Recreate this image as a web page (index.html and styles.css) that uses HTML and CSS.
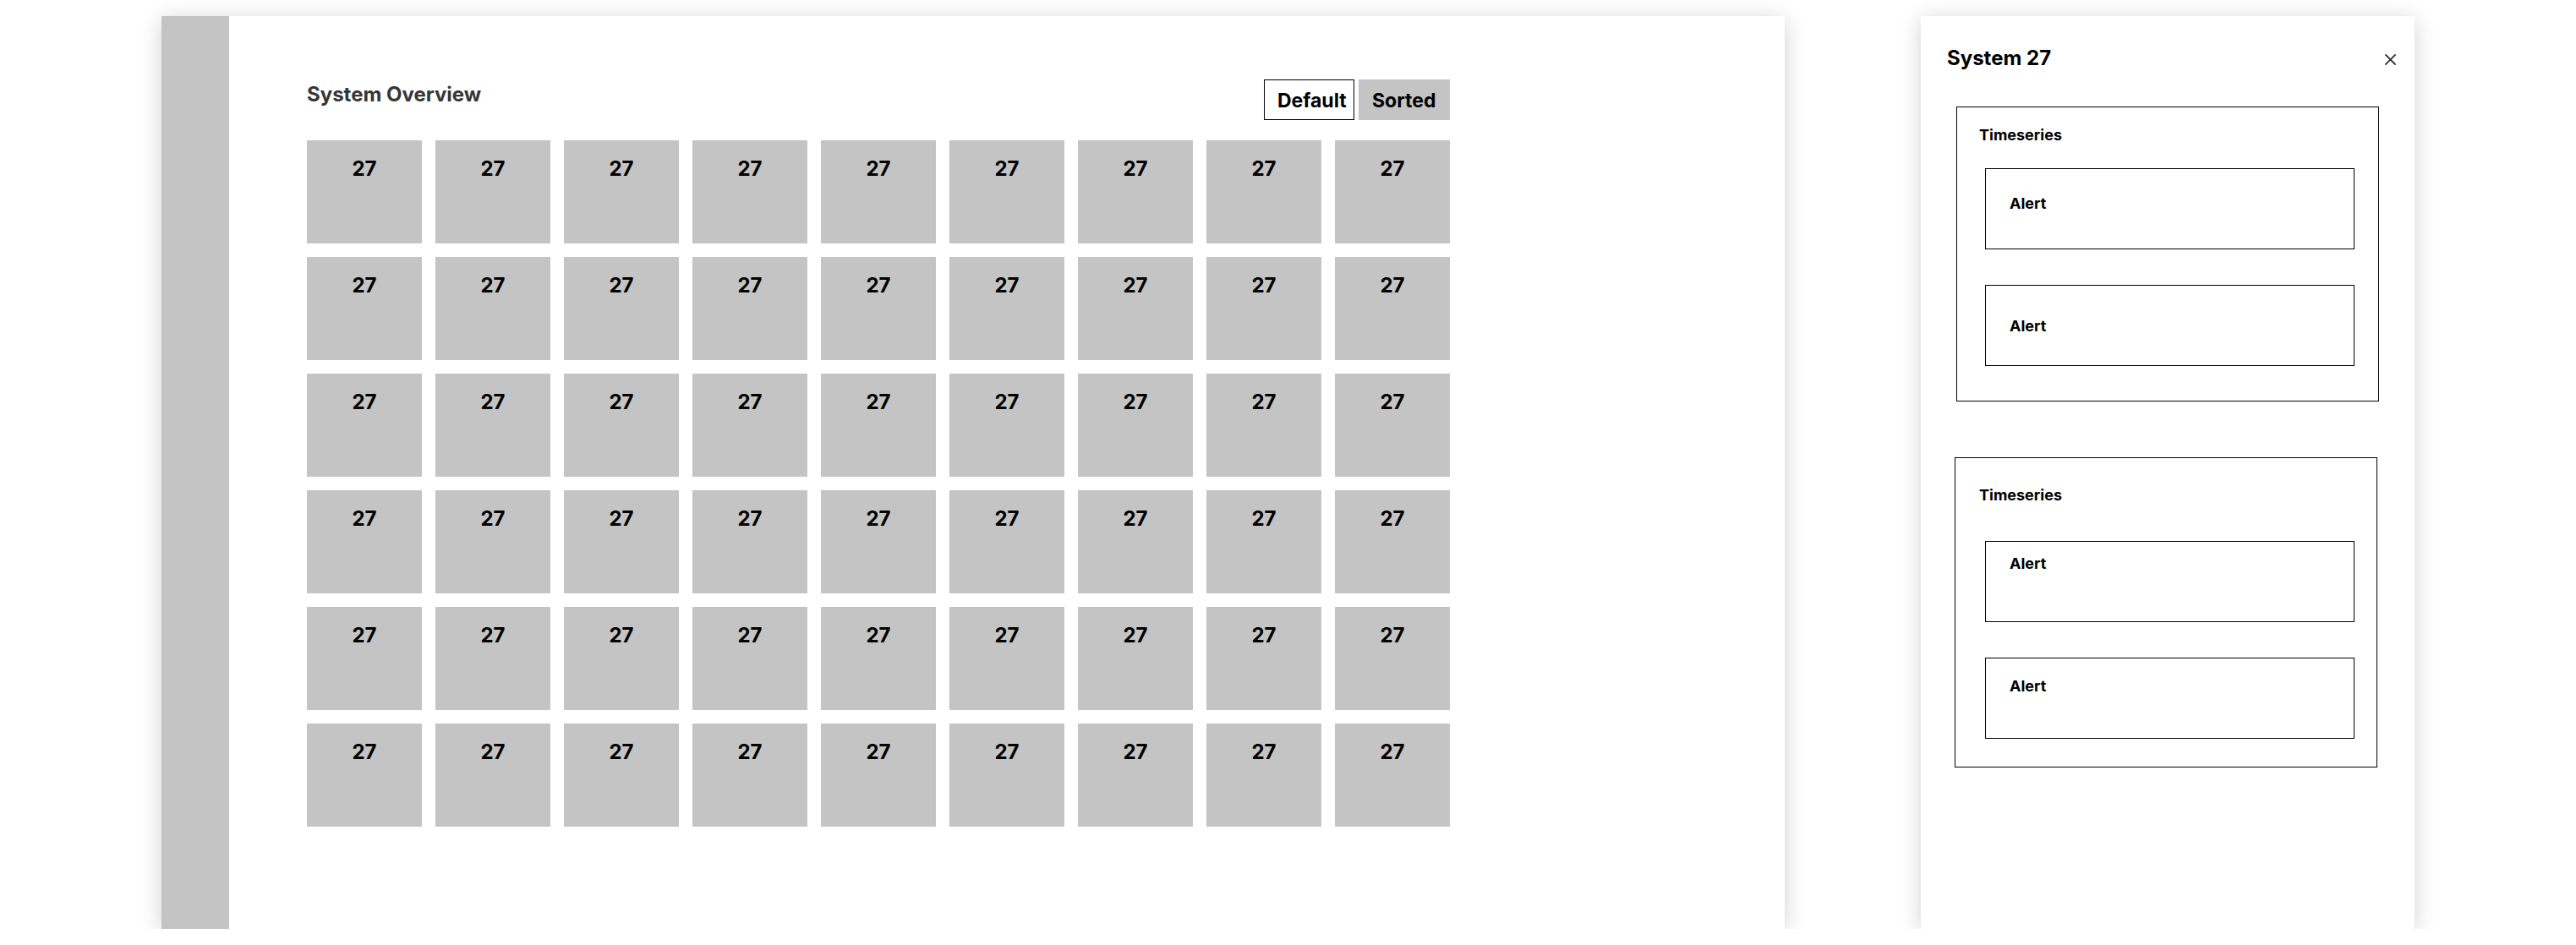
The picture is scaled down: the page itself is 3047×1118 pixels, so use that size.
FILE: index.html
```html
<!DOCTYPE html>
<html lang="en">
<head>
<meta charset="utf-8">
<title>System Overview</title>
<link rel="stylesheet" href="styles.css">
</head>
<body>
<div class="stage">
  <main class="overview">
    <aside class="rail"></aside>
    <section class="content">
      <header class="ov-head">
        <h1 class="ov-title">System Overview</h1>
        <div class="toggle">
          <button class="btn btn-default">Default</button>
          <button class="btn btn-sorted">Sorted</button>
        </div>
      </header>
      <div class="grid">
        <div class="tile">27</div><div class="tile">27</div><div class="tile">27</div><div class="tile">27</div><div class="tile">27</div><div class="tile">27</div><div class="tile">27</div><div class="tile">27</div><div class="tile">27</div>
        <div class="tile">27</div><div class="tile">27</div><div class="tile">27</div><div class="tile">27</div><div class="tile">27</div><div class="tile">27</div><div class="tile">27</div><div class="tile">27</div><div class="tile">27</div>
        <div class="tile">27</div><div class="tile">27</div><div class="tile">27</div><div class="tile">27</div><div class="tile">27</div><div class="tile">27</div><div class="tile">27</div><div class="tile">27</div><div class="tile">27</div>
        <div class="tile">27</div><div class="tile">27</div><div class="tile">27</div><div class="tile">27</div><div class="tile">27</div><div class="tile">27</div><div class="tile">27</div><div class="tile">27</div><div class="tile">27</div>
        <div class="tile">27</div><div class="tile">27</div><div class="tile">27</div><div class="tile">27</div><div class="tile">27</div><div class="tile">27</div><div class="tile">27</div><div class="tile">27</div><div class="tile">27</div>
        <div class="tile">27</div><div class="tile">27</div><div class="tile">27</div><div class="tile">27</div><div class="tile">27</div><div class="tile">27</div><div class="tile">27</div><div class="tile">27</div><div class="tile">27</div>
      </div>
    </section>
  </main>

  <aside class="detail">
    <header class="detail-head">
      <h2 class="detail-title">System 27</h2>
      <button class="close" aria-label="Close">
        <svg width="13" height="13" viewBox="0 0 13 13" aria-hidden="true">
          <path d="M1 1 L12 12 M12 1 L1 12" stroke="#333" stroke-width="1.8" fill="none" stroke-linecap="square"/>
        </svg>
      </button>
    </header>

    <section class="ts ts-1">
      <h3 class="ts-label">Timeseries</h3>
      <div class="alerts">
        <div class="alert alert-a">Alert</div>
        <div class="alert alert-b">Alert</div>
      </div>
    </section>

    <section class="ts ts-2">
      <h3 class="ts-label">Timeseries</h3>
      <div class="alerts">
        <div class="alert alert-c">Alert</div>
        <div class="alert alert-d">Alert</div>
      </div>
    </section>
  </aside>
</div>
</body>
</html>
```

FILE: styles.css
```css
* { box-sizing: border-box; }

html, body {
  margin: 0;
  background: #ffffff;
}

body {
  font-family: Inter, "Liberation Sans", Arial, sans-serif;
  color: #000;
}

.stage {
  display: flex;
  align-items: flex-start;
  gap: 161px;
  padding: 19px 0 0 191px;
}

/* ---------- main overview panel ---------- */
.overview {
  width: 1920px;
  height: 1080px;
  flex: none;
  display: flex;
  background: #fff;
  box-shadow: 0 4px 24px rgba(0, 0, 0, 0.18);
}

.rail {
  width: 80px;
  flex: none;
  background: #c4c4c4;
}

.content {
  padding: 75px 0 0 92px;
}

.ov-head {
  width: 1352px;
  height: 48px;
  display: flex;
  justify-content: space-between;
  align-items: flex-start;
  margin-bottom: 24px;
}

.ov-title {
  margin: 3px 0 0;
  font-size: 24px;
  line-height: 29px;
  font-weight: 700;
  color: #363636;
}

.toggle {
  display: flex;
  gap: 5px;
}

.btn {
  height: 48px;
  margin: 0;
  padding: 2px 0 0 15px;
  text-align: left;
  font-family: inherit;
  font-size: 23px;
  line-height: 29px;
  font-weight: 700;
  color: #000;
  border: 1px solid #000;
  border-radius: 0;
  background: #fff;
}

.btn-default { width: 107px; }

.btn-sorted {
  width: 108px;
  background: #c4c4c4;
  border-color: #c4c4c4;
}

.grid {
  display: grid;
  grid-template-columns: repeat(9, 136px);
  grid-auto-rows: 122px;
  gap: 16px;
}

.tile {
  background: #c4c4c4;
  text-align: center;
  padding-top: 19px;
  font-size: 24px;
  line-height: 29px;
  font-weight: 700;
}

/* ---------- detail panel ---------- */
.detail {
  width: 584px;
  height: 1080px;
  flex: none;
  background: #fff;
  box-shadow: 0 4px 24px rgba(0, 0, 0, 0.18);
  padding-top: 35px;
}

.detail-head {
  height: 29px;
  display: flex;
  align-items: center;
  justify-content: space-between;
  padding: 0 22px 0 31px;
}

.detail-title {
  margin: 0;
  font-size: 24px;
  line-height: 29px;
  font-weight: 700;
}

.close {
  display: flex;
  padding: 0;
  margin-top: 3px;
  border: 0;
  background: transparent;
}

.ts {
  width: 500px;
  border: 1px solid #000;
}

.ts-label {
  margin: 0;
  font-size: 18px;
  line-height: 22px;
  font-weight: 700;
}

.alerts {
  display: flex;
  flex-direction: column;
  gap: 42px;
  margin-left: 7px;
}

.alert {
  width: 437px;
  height: 96px;
  border: 1px solid #000;
  padding-left: 28px;
  font-size: 18px;
  line-height: 22px;
  font-weight: 700;
}

.ts-1 {
  margin: 43px 0 0 42px;
  padding: 22px 0 41px 26px;
}
.ts-1 .alerts { margin-top: 28px; }

.ts-2 {
  margin: 66px 0 0 40px;
  padding: 33px 0 33px 28px;
}
.ts-2 .alerts { margin-top: 43px; }

.alert-a { padding-top: 30px; }
.alert-b { padding-top: 37px; }
.alert-c { padding-top: 15px; }
.alert-d { padding-top: 22px; }
```
